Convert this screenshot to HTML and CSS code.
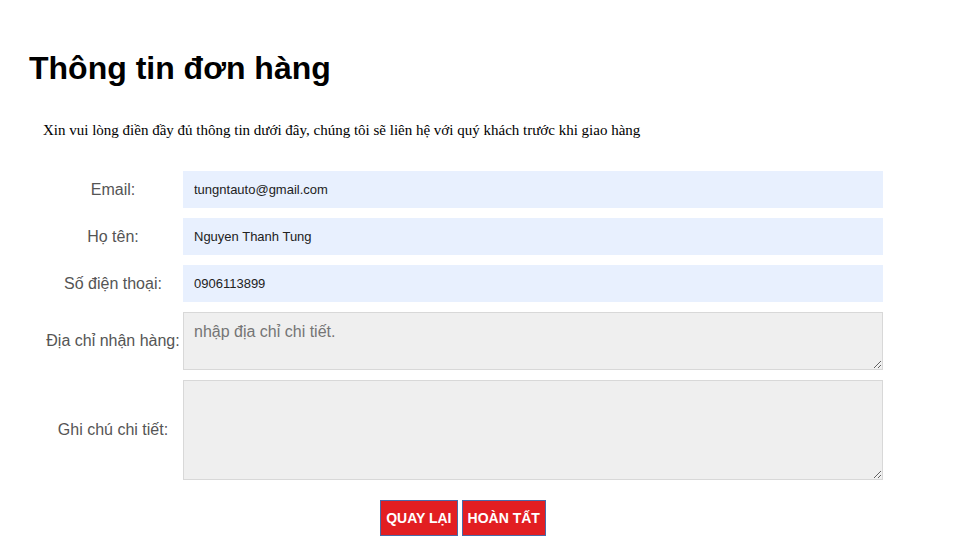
FILE: index.html
```html
<!DOCTYPE html>
<html lang="vi">
<head>
    <meta charset="UTF-8">
    <meta name="viewport" content="width=device-width, initial-scale=1.0">
    <title>Thông tin đơn hàng</title>
    <link rel="stylesheet" href="styles.css">
</head>
<body>
    <div class="container">
        <h1 class="title">Thông tin đơn hàng</h1>
        <p class="intro">Xin vui lòng điền đầy đủ thông tin dưới đây, chúng tôi sẽ liên hệ với quý khách trước khi giao hàng</p>

        <form class="order-form">
            <label class="form-label" for="email">Email:</label>
            <input class="form-input" id="email" type="text" value="tungntauto@gmail.com">

            <label class="form-label" for="name">Họ tên:</label>
            <input class="form-input" id="name" type="text" value="Nguyen Thanh Tung">

            <label class="form-label" for="phone">Số điện thoại:</label>
            <input class="form-input" id="phone" type="text" value="0906113899">

            <label class="form-label" for="address">Địa chỉ nhận hàng:</label>
            <textarea class="form-area address" id="address" placeholder="nhập địa chỉ chi tiết."></textarea>

            <label class="form-label" for="note">Ghi chú chi tiết:</label>
            <textarea class="form-area note" id="note"></textarea>

            <div class="form-actions">
                <button type="button" class="action-btn">QUAY LẠI</button>
                <button type="button" class="action-btn">HOÀN TẤT</button>
            </div>
        </form>
    </div>
</body>
</html>
```

FILE: styles.css
```css
* {
    margin: 0;
    padding: 0;
    box-sizing: border-box;
}

body {
    font-family: "Liberation Sans", Arial, sans-serif;
    background: #fff;
    color: #000;
}

.container {
    padding: 50px 0 0 29px;
}

.title {
    font-size: 32px;
    font-weight: bold;
    line-height: 37px;
    color: #000;
}

.intro {
    font-family: "Liberation Serif", "Times New Roman", serif;
    font-size: 15px;
    line-height: 18px;
    margin: 34px 0 0 14px;
}

.order-form {
    display: grid;
    grid-template-columns: 140px 700px;
    row-gap: 10px;
    align-items: center;
    margin: 32px 0 0 14px;
    width: 840px;
}

.form-label {
    text-align: center;
    font-size: 16px;
    color: #555;
}

.form-input {
    height: 37px;
    border: 1px solid #e8f0fe;
    background: #e8f0fe;
    padding: 0 10px;
    font-family: "Liberation Sans", Arial, sans-serif;
    font-size: 13px;
    color: #222;
    outline: none;
}

.form-area {
    border: 1px solid #d8d8d8;
    background: #efefef;
    padding: 10px 10px 8px;
    font-family: "Liberation Sans", Arial, sans-serif;
    font-size: 16px;
    color: #333;
    resize: vertical;
}

.form-area::placeholder {
    color: #757575;
}

.form-area.address {
    height: 58px;
}

.form-area.note {
    height: 100px;
}

.form-actions {
    grid-column: 1 / 3;
    display: flex;
    justify-content: center;
    gap: 4px;
    margin-top: 10px;
}

.action-btn {
    height: 36px;
    padding: 0 5px;
    background: #e21e22;
    color: #fff;
    border: 1px solid #4a6aa8;
    font-family: "Liberation Sans", Arial, sans-serif;
    font-size: 14px;
    font-weight: bold;
    cursor: pointer;
}
```
